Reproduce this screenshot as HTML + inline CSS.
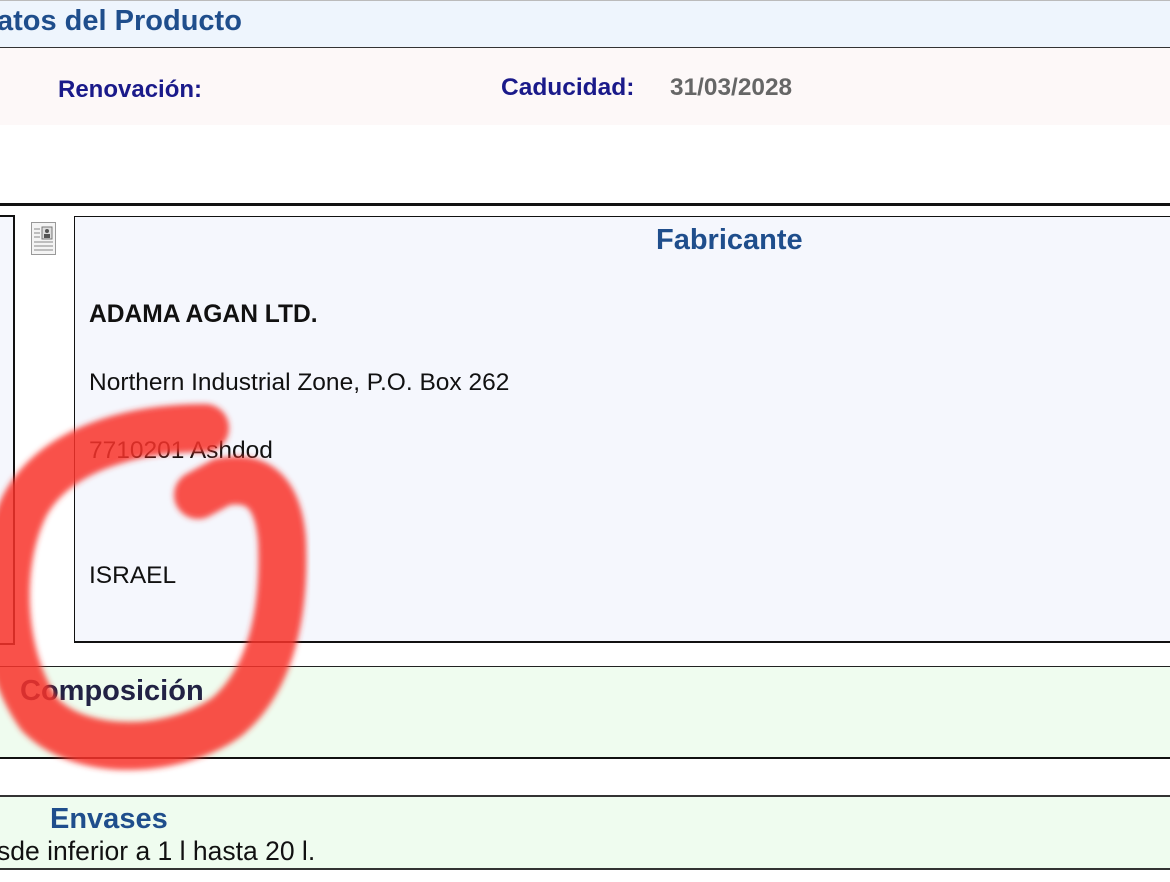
<!DOCTYPE html>
<html><head><meta charset="utf-8"><style>
body{margin:0;width:1170px;height:882px;overflow:hidden;background:#fff;font-family:"Liberation Sans",sans-serif;position:relative}
div,span{position:absolute;white-space:nowrap}
.b{font-weight:bold}
</style></head><body>
<div style="left:0;top:0;width:1170px;height:46px;background:#eef5fd;border-bottom:2px solid #333;border-top:1px solid #bbb"></div>
<span class="b" style="left:-3px;top:5px;font-size:29px;color:#1f4e8c">atos del Producto</span>
<div style="left:0;top:48px;width:1170px;height:77px;background:#fdf8f8"></div>
<span class="b" style="left:58px;top:76px;font-size:24px;color:#1a1a8a">Renovación:</span>
<span class="b" style="left:501px;top:74px;font-size:24.5px;color:#1a1a8a">Caducidad:</span>
<span class="b" style="left:670px;top:74px;font-size:24.4px;color:#666">31/03/2028</span>
<div style="left:0;top:203px;width:1170px;height:3px;background:#111"></div>
<div style="left:0;top:215px;width:13px;height:426px;background:#f5f7fd;border:2px solid #111;border-left:none"></div>
<svg style="position:absolute;left:31px;top:222px" width="25" height="33" viewBox="0 0 25 33"><rect x="0.5" y="0.5" width="24" height="32" fill="#f4f4f4" stroke="#999"/><g stroke="#888"><line x1="3" y1="7" x2="9" y2="7"/><line x1="3" y1="11" x2="9" y2="11"/><line x1="3" y1="15" x2="9" y2="15"/><line x1="3" y1="20" x2="22" y2="20"/><line x1="3" y1="24" x2="22" y2="24"/><line x1="3" y1="28" x2="22" y2="28"/></g><rect x="11" y="5" width="10" height="12" fill="#ddd" stroke="#777"/><circle cx="16" cy="9" r="2" fill="#555"/><rect x="13" y="12" width="6" height="4" fill="#555"/></svg>
<div style="left:74px;top:216px;width:1100px;height:424px;background:#f5f7fd;border-top:1px solid #111;border-left:1px solid #111;border-bottom:2px solid #111"></div>
<span class="b" style="left:656px;top:224px;font-size:29px;color:#1f4e8c">Fabricante</span>
<span class="b" style="left:89px;top:301px;font-size:24.6px;color:#111">ADAMA AGAN LTD.</span>
<span style="left:89px;top:369px;font-size:24.5px;color:#111">Northern Industrial Zone, P.O. Box 262</span>
<span style="left:89px;top:437px;font-size:24.5px;color:#111">7710201 Ashdod</span>
<span style="left:89px;top:562px;font-size:24.5px;color:#111">ISRAEL</span>
<div style="left:0;top:666px;width:1170px;height:90px;background:#effcef;border-top:1px solid #222;border-bottom:2px solid #111"></div>
<span class="b" style="left:20px;top:675px;font-size:29px;color:#222244">Composición</span>
<div style="left:0;top:795px;width:1170px;height:71px;background:#effcef;border-top:2px solid #333;border-bottom:2px solid #333"></div>
<span class="b" style="left:50px;top:803px;font-size:29px;color:#1f4e8c">Envases</span>
<span style="left:-3px;top:836px;font-size:26.5px;color:#111">sde inferior a 1 l hasta 20 l.</span>
<svg style="position:absolute;left:0;top:0" width="1170" height="882"><defs><filter id="f"><feGaussianBlur stdDeviation="3"/></filter></defs>
<path d="M205 428 C130 428 55 450 25 505 C-5 565 0 660 40 715 C85 760 180 752 228 716 C272 678 285 610 282 540 C278 492 258 475 222 482 L198 495" fill="none" stroke="#f8322a" stroke-opacity="0.85" stroke-width="48" stroke-linecap="round" filter="url(#f)"/></svg>
</body></html>
